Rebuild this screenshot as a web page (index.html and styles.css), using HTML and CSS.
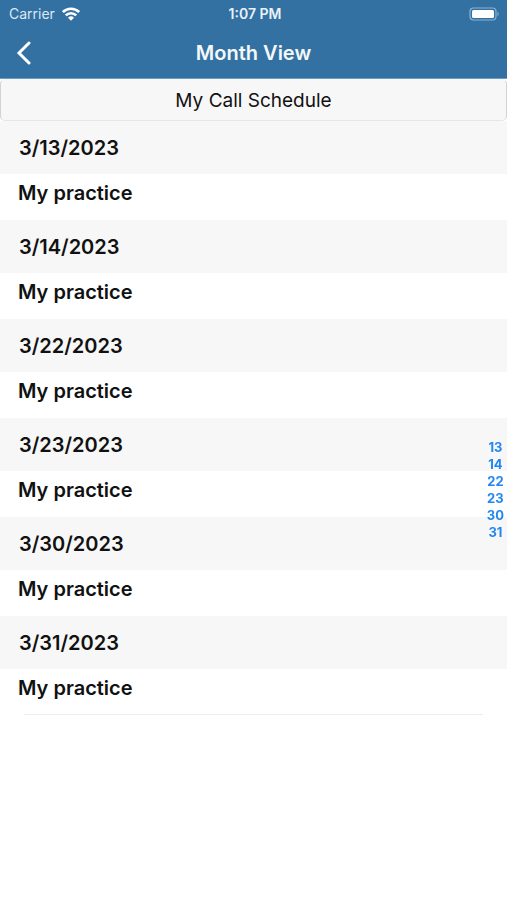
FILE: index.html
```html
<!DOCTYPE html>
<html lang="en">
<head>
<meta charset="utf-8">
<meta name="viewport" content="width=device-width, initial-scale=1">
<title>Month View</title>
<link rel="stylesheet" href="styles.css">
</head>
<body>
<header class="top">
  <div class="status">
    <div class="carrier">
      <span>Carrier</span>
      <svg class="wifi" viewBox="0 0 18 14" aria-hidden="true">
        <g fill="none" stroke="#fff" stroke-width="2.7">
          <path d="M.9 5.1a11.5 11.5 0 0 1 16.2 0"/>
          <path d="M3.8 8.4a7.4 7.4 0 0 1 10.4 0"/>
        </g>
        <path fill="#fff" d="M6 10.8a4.3 4.3 0 0 1 6 0L9 13.8z"/>
      </svg>
    </div>
    <span class="time">1:07 PM</span>
    <svg class="battery" viewBox="0 0 32 14" aria-hidden="true">
      <rect x="1" y="1" width="26" height="12" rx="3.5" fill="none" stroke="#8db2d0" stroke-width="1.2"/>
      <rect x="3" y="3" width="22" height="8" rx="1.5" fill="#fff"/>
      <path d="M28.5 4.8a2.6 2.6 0 0 1 0 4.4z" fill="#8db2d0"/>
    </svg>
  </div>
  <nav class="bar">
    <button class="back" type="button" aria-label="Back">
      <svg viewBox="0 0 16 24" aria-hidden="true"><path d="M13 2 3 12l10 10" fill="none" stroke="#fff" stroke-width="3" stroke-linecap="round" stroke-linejoin="miter"/></svg>
    </button>
    <h1 class="title">Month View</h1>
  </nav>
</header>
<main class="content">
  <button class="schedule" type="button">My Call Schedule</button>
  <section><h2 class="date" id="d13">3/13/2023</h2><p class="entry">My practice</p></section>
  <section><h2 class="date" id="d14">3/14/2023</h2><p class="entry">My practice</p></section>
  <section><h2 class="date" id="d22">3/22/2023</h2><p class="entry">My practice</p></section>
  <section><h2 class="date" id="d23">3/23/2023</h2><p class="entry">My practice</p></section>
  <section><h2 class="date" id="d30">3/30/2023</h2><p class="entry">My practice</p></section>
  <section><h2 class="date" id="d31">3/31/2023</h2><p class="entry">My practice</p></section>
  <hr class="end">
</main>
<nav class="index" aria-label="Days">
  <a href="#d13">13</a>
  <a href="#d14">14</a>
  <a href="#d22">22</a>
  <a href="#d23">23</a>
  <a href="#d30">30</a>
  <a href="#d31">31</a>
</nav>
</body>
</html>
```
FILE: styles.css
```css
* { box-sizing: border-box; }

body {
  margin: 0;
  background: #fff;
  color: #111;
  font-family: Inter, "Liberation Sans", sans-serif;
}

.top {
  background: #3371a3;
  color: #fff;
  border-bottom: 1px solid #6f9dc2;
}

.status {
  display: grid;
  grid-template-columns: 1fr auto 1fr;
  align-items: center;
  height: 27px;
  padding: 0 6px 0 9px;
  font-size: 14px;
}

.carrier {
  display: flex;
  align-items: center;
  gap: 7px;
  color: #dce8f2;
}

.wifi { width: 18px; height: 14px; }
.time { font-weight: 600; color: #eaf2f8; }
.battery { width: 32px; height: 14px; justify-self: end; }

.bar {
  display: grid;
  grid-template-columns: 48px 1fr 48px;
  align-items: center;
  height: 51px;
}

.back {
  display: flex;
  align-items: center;
  justify-content: center;
  height: 48px;
  padding: 0;
  border: 0;
  background: none;
}

.back svg { width: 16px; height: 24px; }

.title {
  margin: 0;
  color: #f4f8fb;
  font-size: 20px;
  font-weight: 600;
  line-height: 24px;
  text-align: center;
}

.content { background: #fff; }

.schedule {
  display: block;
  width: 100%;
  height: 42px;
  padding: 2px 0 0;
  border: 1px solid #e6e6e6;
  border-top-color: #f7f7f7;
  border-left-color: #d2d2d2;
  border-right-color: #d2d2d2;
  border-radius: 5px;
  background: #f7f7f7;
  color: #111;
  font: 400 19px/24px Inter, "Liberation Sans", sans-serif;
}

.date, .entry {
  margin: 0;
  font-size: 20px;
  font-weight: 600;
  line-height: 24px;
}

.date {
  height: 53px;
  padding: 15px 19px;
  background: #f7f7f7;
}

.entry {
  height: 46px;
  padding: 7px 18px;
}

.end {
  margin: -1px 24px 0;
  border: 0;
  border-top: 1px solid #ececec;
}

.index {
  position: fixed;
  top: 439px;
  right: 3px;
  display: flex;
  flex-direction: column;
  align-items: center;
}

.index a {
  color: #2287f0;
  font-size: 13px;
  font-weight: 700;
  line-height: 17px;
  text-decoration: none;
}
```
